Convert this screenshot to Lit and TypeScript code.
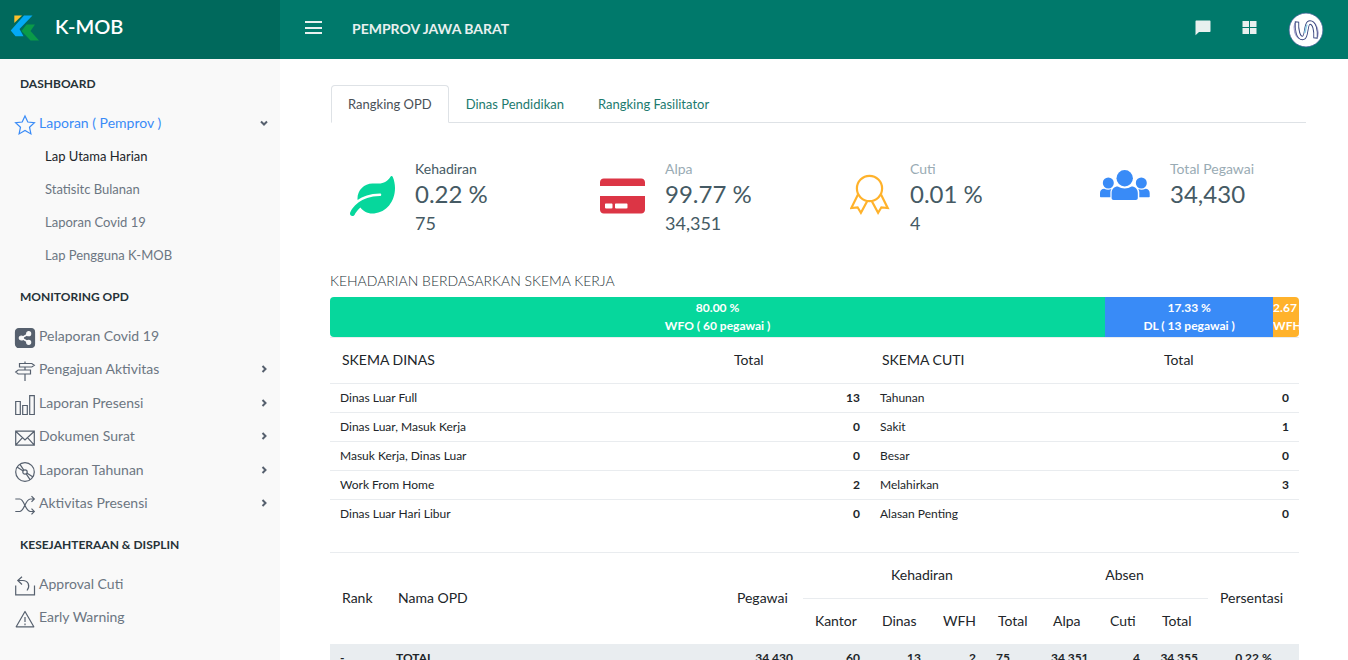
import { LitElement, html, svg, css, TemplateResult } from "lit";
import { customElement, property } from "lit/decorators.js";
import { classMap } from "lit/directives/class-map.js";

type Chevron = "right" | "down" | "";

const glyphs: Record<string, TemplateResult> = {
  star: svg`<path d="M10 .9l2.800 6.100 6.600.7-4.900 4.500 1.400 6.700L10 15.500l-5.900 3.400 1.400-6.700L.6 7.700l6.600-.7z"/>`,
  share: svg`<rect x=".5" y=".5" width="19" height="19" rx="3.500" fill="currentColor"/>
    <g stroke="#f9f9f9" fill="#f9f9f9"><path d="M13.700 5.700L6.300 10l7.400 4.300" fill="none" stroke-width="1.600"/><circle cx="13.700" cy="5.700" r="2"/><circle cx="6.300" cy="10" r="2"/><circle cx="13.700" cy="14.300" r="2"/></g>`,
  sign: svg`<path d="M10 .5v2M10 6v3M10 13v7M4.500 2.500h12.300l2.500 1.800L16.800 6H4.500zM15.500 9H3.200L.7 11l2.500 2h12.300z"/>`,
  bars: svg`<path d="M.7 6.500h4.600v13H.7zM7.700 10.500h4.600v9H7.700zM14.700.7h4.600v18.800h-4.600z"/>`,
  mail: svg`<path d="M.7 3.200h18.600v14H.7zM.7 3.200L10 12l9.300-8.800M.7 17.200l6.800-7.500M19.300 17.200l-6.800-7.500"/>`,
  disc: svg`<circle cx="10" cy="10" r="9.300"/><circle cx="10" cy="10" r="2.200"/><path d="M2 5l6.200 4M4.800 2.200l4 5.900M18 15l-6.200-4M15.200 17.800l-4-5.900"/>`,
  shuffle: svg`<path d="M.3 4h4.500c4.500 0 5.500 12.500 10.500 12.500h4M.3 16.500h4.500c4.500 0 5.500-12.500 10.500-12.500h4M16.500 1.200L19.300 4l-2.800 2.800M16.500 13.700l2.800 2.800-2.800 2.800"/>`,
  reply: svg`<path d="M.7 9.500v9.300h18.800V9.500M7 .8L2.800 4.500 7 8.500M2.800 4.500h5c5.500 0 7.700 5.500 4.200 10"/>`,
  warning: svg`<path d="M10 2.500L1.200 17.800h17.600zM10 8v5M10 14.500v1.700" stroke-linejoin="round"/>`,
};

const icons: Record<string, TemplateResult> = {
  leaf: html`<svg class="icon green" viewBox="0 0 576 512" width="45" height="40" aria-hidden="true"><path fill="currentColor" d="M546.200 9.700c-5.600-12.500-21.600-13-28.300-1.200C486.900 62.400 431.400 96 368 96h-80C182 96 96 182 96 288c0 7 .8 13.700 1.500 20.500C161.300 262.800 253.400 224 384 224c8.800 0 16 7.200 16 16s-7.200 16-16 16C132.600 256 26 410.100 2.400 468c-6.600 16.300 1.200 34.900 17.500 41.600 16.400 6.800 35-1.100 41.800-17.300 1.500-3.600 20.900-47.900 71.900-90.600 32.400 43.900 94 85.800 174.900 77.200C465.500 467.500 576 326.700 576 154.300c0-50.200-10.800-102.200-29.800-144.600z"/></svg>`,
  card: html`<svg class="icon red" viewBox="0 0 576 512" width="45" height="40" aria-hidden="true"><path fill="currentColor" d="M0 432c0 26.500 21.500 48 48 48h480c26.500 0 48-21.500 48-48V256H0v176zm192-68c0-6.600 5.400-12 12-12h136c6.600 0 12 5.400 12 12v40c0 6.600-5.400 12-12 12H204c-6.600 0-12-5.400-12-12v-40zm-128 0c0-6.600 5.400-12 12-12h72c6.600 0 12 5.400 12 12v40c0 6.600-5.400 12-12 12H76c-6.600 0-12-5.400-12-12v-40zM576 80v48H0V80c0-26.500 21.500-48 48-48h480c26.500 0 48 21.500 48 48z"/></svg>`,
  medal: html`<svg class="icon amber" viewBox="0 0 40 43" width="40" height="43" aria-hidden="true"><g fill="none" stroke="currentColor" stroke-width="2.200"><circle cx="19.500" cy="14.500" r="12.600"/><path d="M8 20.500L1.300 34l6.300-.7 3.300 5.400L17.300 27M31 20.500L37.700 34l-6.300-.7-3.300 5.400L21.700 27"/></g></svg>`,
  people: html`<svg class="icon blue" viewBox="0 -4 50 34" width="50" height="34" aria-hidden="true"><g fill="currentColor"><circle cx="8.300" cy="13" r="5.500"/><circle cx="41.300" cy="13" r="5.500"/><path d="M0 26.500v-3.500c0-2.500 1.700-4.200 4.200-4.200 2.500 1.300 5.200 1.200 7.300.2-.8 1-1.100 2.200-1.100 3.600v4.700H1c-.6 0-1-.2-1-.8zM49.700 26.500v-3.500c0-2.500-1.700-4.200-4.200-4.200-2.500 1.300-5.200 1.200-7.300.2.8 1 1.100 2.200 1.100 3.600v4.700h9.400c.6 0 1-.2 1-.8z"/><circle cx="24.700" cy="8.200" r="8.200"/><path d="M11.600 28v-5c0-4 2.700-6.500 6.200-6.500 4.200 2.500 9.600 2.500 13.800 0 3.500 0 6.200 2.500 6.200 6.500v5c0 1.300-.8 2-2 2H13.600c-1.200 0-2-.7-2-2z"/></g></svg>`,
};

@customElement("side-link")
class SideLink extends LitElement {
  @property() label = "";
  @property() icon = "";
  @property() chevron: Chevron = "";
  @property({ type: Boolean }) active = false;
  @property({ type: Boolean }) sub = false;

  static styles = css`
    :host { display: block; }
    .link {
      display: flex;
      align-items: center;
      gap: 4px;
      padding: 4px 12px 5px 15px;
      font-size: 14px;
      line-height: 1.75;
      color: #6c7682;
      text-decoration: none;
    }
    .sub { padding: 5px 45px 7px; font-size: 13px; line-height: 21px; }
    .active { color: #398bf7; }
    .sub.active { color: #212529; }
    .glyph {
      width: 20px;
      height: 20px;
      margin: 2px 0 -2px;
      flex: none;
      overflow: visible;
      fill: none;
      color: #56606e;
      stroke: currentColor;
      stroke-width: 1.2;
    }
    .active .glyph { color: #398bf7; }
    .text { flex: 1; white-space: nowrap; }
    .chevron { width: 8px; height: 8px; fill: none; stroke: #56606e; stroke-width: 2; }
    .down { transform: rotate(90deg); }
  `;

  render() {
    return html`<a href="#" class=${classMap({ link: true, sub: this.sub, active: this.active })}>
      ${this.icon ? html`<svg class="glyph" viewBox="0 0 20 20" aria-hidden="true">${glyphs[this.icon]}</svg>` : ""}
      <span class="text">${this.label}</span>
      ${this.chevron
        ? html`<svg class=${classMap({ chevron: true, down: this.chevron === "down" })} viewBox="0 0 8 8" aria-hidden="true"><path d="M2.500 1l3 3-3 3"/></svg>`
        : ""}
    </a>`;
  }
}

@customElement("app-root")
class AppRoot extends LitElement {
  static styles = css`
    :host {
      display: grid;
      grid-template: 59px 1fr / 280px 1fr;
      height: 100vh;
      overflow: hidden;
      background: #fff;
      color: #212529;
      font-family: Lato, "Open Sans", sans-serif;
    }
    button { padding: 0; border: 0; background: none; color: #e8f0ef; cursor: pointer; display: flex; }
    .brand { display: flex; align-items: center; gap: 16px; padding: 0 10px 3px; background: #00695c; color: #fff; font-size: 20px; font-weight: 600; }
    .name { padding-bottom: 5px; }
    .topbar { display: flex; align-items: center; padding: 0 24px; background: #00796b; color: #e8f0ef; }
    .menu { margin: 0 30px 4px 1px; }
    .org { flex: 1; margin: 0; padding-bottom: 2px; font-size: 14px; font-weight: 700; }
    .tools { display: flex; align-items: center; gap: 30px; }
    .tools .tool { margin-bottom: 4px; }
    .side { padding-top: 1px; background: #f9f9f9; overflow: hidden; }
    .heading { margin: 0; padding: 13px 20px 12px; font-size: 12px; line-height: 22px; font-weight: 700; color: #263238; }
    .main { overflow: auto; scrollbar-width: none; padding: 26px 0 40px; }
    .tabs { display: flex; margin: 0 42px 0 51px; border-bottom: 1px solid #dee2e6; }
    .tab { margin-bottom: -1px; padding: 8px 16px; border: 1px solid transparent; border-radius: 4px 4px 0 0; font-size: 13px; line-height: 20px; color: #1c7a6e; text-decoration: none; }
    .tab.current { border-color: #dee2e6 #dee2e6 #fff; color: #495057; background: #fff; }
    .stats { display: grid; grid-template-columns: repeat(4, 1fr); align-items: start; padding: 35px 18px 0 50px; }
    .stat { display: flex; align-items: center; gap: 20px; padding-left: 20px; color: #455a64; }
    .label { font-size: 14px; line-height: 22px; color: #99abb4; }
    .label.dark { color: #455a64; }
    .value { font-size: 24px; line-height: 28px; }
    .count { margin-top: 5px; font-size: 18px; line-height: 20px; }
    .icon { display: block; flex: none; }
    .green { color: #06d79c; }
    .red { color: #dc3545; }
    .amber { color: #ffb22b; }
    .blue { color: #398bf7; }
    .report { margin: 37px 49px 0 50px; }
    .title { margin: 0; font-size: 14px; line-height: 22px; font-weight: 300; color: #263238; }
    .bar { display: flex; margin-top: 5px; height: 40px; border-radius: 4px; overflow: hidden; }
    .part { overflow: hidden; padding: 2px 0; color: #fff; font-size: 12px; line-height: 18px; font-weight: 700; text-align: center; white-space: nowrap; display: flex; flex-direction: column; align-items: center; }
    .part.wfh { align-items: flex-start; }
    .wfo { background: #06d79c; }
    .dl { background: #398bf7; }
    .wfh { background: #ffb22b; }
    table { width: 100%; border-collapse: separate; border-spacing: 0; table-layout: fixed; }
    th { height: 43px; padding: 0 12px 2px; font-size: 14px; font-weight: 400; text-align: left; white-space: nowrap; }
    td { height: 26px; padding: 0 10px 2px; font-size: 12px; white-space: nowrap; }
    .schemes { margin-bottom: 24px; border-top: 1px solid #e9ecef; }
    .schemes th { border-bottom: 1px solid #e9ecef; }
    .schemes tbody tr:not(:first-child) td { border-top: 1px solid #e9ecef; }
    .num { text-align: right; font-weight: 700; }
    .ranking { border-top: 1px solid #e9ecef; }
    .ranking .group { text-align: center; border-bottom: 1px solid #e9ecef; }
    .ranking td { background: #e9edf0; font-weight: 700; }
    .ranking .mid { text-align: center; }
    .w52 { width: 52px; } .w55 { width: 55px; } .w56 { width: 56px; } .w57 { width: 57px; }
    .w58 { width: 58px; } .w61 { width: 61px; } .w67 { width: 67px; } .w78 { width: 78px; }
    .w91 { width: 91px; } .w147 { width: 147px; } .w148 { width: 148px; } .w282 { width: 282px; }
  `;

  private stats = [
    { icon: "leaf", label: "Kehadiran", value: "0.22 %", count: "75", dark: true },
    { icon: "card", label: "Alpa", value: "99.77 %", count: "34,351" },
    { icon: "medal", label: "Cuti", value: "0.01 %", count: "4" },
    { icon: "people", label: "Total Pegawai", value: "34,430" },
  ];

  private parts = [
    { kind: "wfo", share: 80, top: "80.00 %", text: "WFO ( 60 pegawai )" },
    { kind: "dl", share: 17.33, top: "17.33 %", text: "DL ( 13 pegawai )" },
    { kind: "wfh", share: 2.67, top: "2.67 %", text: "WFH ( 2 pegawai )" },
  ];

  private schemes = [
    ["Dinas Luar Full", 13, "Tahunan", 0],
    ["Dinas Luar, Masuk Kerja", 0, "Sakit", 1],
    ["Masuk Kerja, Dinas Luar", 0, "Besar", 0],
    ["Work From Home", 2, "Melahirkan", 3],
    ["Dinas Luar Hari Libur", 0, "Alasan Penting", 0],
  ];

  render() {
    return html`
      <div class="brand">
        <svg width="29" height="26" viewBox="0 0 29 26" aria-hidden="true">
          <path fill="#fbc02d" d="M4.300.5H12L4.300 8z"/>
          <path fill="#03a9f4" d="M14 .5h8.500L9.500 14l4 7.200H5.500L.7 15.500z"/>
          <path fill="#0a9a48" d="M16.500 9.500H25L20.500 16 29 25.500h-8.500L11.500 16z"/>
        </svg>
        <span class="name">K-MOB</span>
      </div>
      <header class="topbar">
        <button class="menu" aria-label="Menu"><svg width="17" height="14" aria-hidden="true"><path d="M0 1h17M0 7h17M0 12h17" stroke="currentColor" stroke-width="2"/></svg></button>
        <h1 class="org">PEMPROV JAWA BARAT</h1>
        <div class="tools">
          <button class="tool" aria-label="Pesan"><svg width="17" height="16" viewBox="0 0 17 16" aria-hidden="true"><path fill="currentColor" d="M1.500.5h13c.7 0 1 .3 1 1v9.500c0 .7-.3 1-1 1H4L.5 15.200V1.500c0-.7.3-1 1-1z"/></svg></button>
          <button class="tool" aria-label="Aplikasi"><svg width="16" height="14" viewBox="0 0 16 14" aria-hidden="true"><path fill="currentColor" d="M.5 0H7v6H.5zM8 0h6.500v6H8zM.5 7H7v6H.5zM8 7h6.500v6H8z"/></svg></button>
          <button aria-label="Profil"><svg width="36" height="36" viewBox="0 0 36 36" aria-hidden="true"><circle cx="18" cy="18" r="16.900" fill="#fff" stroke="#3f5f94" stroke-width=".8"/><g fill="none"><path d="M7 11c-2 6 0 13 4.500 15.500M29.500 25c1.500-6-.5-12.500-5-15.500" stroke="#a9a6cf" stroke-width="1.500"/><path d="M9 9.500c-.5 7 1 16.500 5.500 16.500 5 0 2.500-15.500 7.500-15.500 4.500 0 6 8.500 5.500 16" stroke="#35427c" stroke-width="4.400"/><path d="M9 10.500c-.5 7 1 15.500 5.500 15.500 5 0 2.500-15.500 7.500-15.500 4.500 0 6 8 5.500 15" stroke="#fff" stroke-width="2.600"/><path d="M16.800 21c.8-3 1.200-6 2.200-8.500" stroke="#8fd0e8" stroke-width="1.500"/></g></svg></button>
        </div>
      </header>
      <nav class="side">
        <h2 class="heading">DASHBOARD</h2>
        <side-link icon="star" label="Laporan ( Pemprov )" chevron="down" active></side-link>
        <side-link sub active label="Lap Utama Harian"></side-link>
        <side-link sub label="Statisitc Bulanan"></side-link>
        <side-link sub label="Laporan Covid 19"></side-link>
        <side-link sub label="Lap Pengguna K-MOB"></side-link>
        <h2 class="heading">MONITORING OPD</h2>
        <side-link icon="share" label="Pelaporan Covid 19"></side-link>
        <side-link icon="sign" label="Pengajuan Aktivitas" chevron="right"></side-link>
        <side-link icon="bars" label="Laporan Presensi" chevron="right"></side-link>
        <side-link icon="mail" label="Dokumen Surat" chevron="right"></side-link>
        <side-link icon="disc" label="Laporan Tahunan" chevron="right"></side-link>
        <side-link icon="shuffle" label="Aktivitas Presensi" chevron="right"></side-link>
        <h2 class="heading">KESEJAHTERAAN &amp; DISPLIN</h2>
        <side-link icon="reply" label="Approval Cuti"></side-link>
        <side-link icon="warning" label="Early Warning"></side-link>
      </nav>
      <main class="main">
        <nav class="tabs">
          <a class="tab current" href="#">Rangking OPD</a>
          <a class="tab" href="#">Dinas Pendidikan</a>
          <a class="tab" href="#">Rangking Fasilitator</a>
        </nav>
        <section class="stats">
          ${this.stats.map((s) => html`<div class="stat">${icons[s.icon]}
            <div>
              <div class=${classMap({ label: true, dark: !!s.dark })}>${s.label}</div>
              <div class="value">${s.value}</div>
              ${s.count ? html`<div class="count">${s.count}</div>` : ""}
            </div>
          </div>`)}
        </section>
        <section class="report">
          <h3 class="title">KEHADARIAN BERDASARKAN SKEMA KERJA</h3>
          <div class="bar">
            ${this.parts.map((p) => html`<div class="part ${p.kind}" style="width:${p.share}%"><span>${p.top}</span><span>${p.text}</span></div>`)}
          </div>
          <table class="schemes">
            <colgroup><col><col class="w148"><col class="w282"><col class="w147"></colgroup>
            <thead><tr><th>SKEMA DINAS</th><th>Total</th><th>SKEMA CUTI</th><th>Total</th></tr></thead>
            <tbody>${this.schemes.map((r) => html`<tr><td>${r[0]}</td><td class="num">${r[1]}</td><td>${r[2]}</td><td class="num">${r[3]}</td></tr>`)}</tbody>
          </table>
          <table class="ranking">
            <colgroup><col class="w56"><col><col class="w78"><col class="w67"><col class="w61"><col class="w55"><col class="w55"><col class="w57"><col class="w52"><col class="w58"><col class="w91"></colgroup>
            <thead>
              <tr><th rowspan="2">Rank</th><th rowspan="2">Nama OPD</th><th rowspan="2">Pegawai</th><th class="group" colspan="4">Kehadiran</th><th class="group" colspan="3">Absen</th><th rowspan="2">Persentasi</th></tr>
              <tr><th>Kantor</th><th>Dinas</th><th>WFH</th><th>Total</th><th>Alpa</th><th>Cuti</th><th>Total</th></tr>
            </thead>
            <tbody>
              <tr><td>-</td><td>TOTAL</td><td class="num">34,430</td><td class="num">60</td><td class="num">13</td><td class="num">2</td><td>75</td><td class="num">34,351</td><td class="num">4</td><td class="num">34,355</td><td class="mid">0.22 %</td></tr>
            </tbody>
          </table>
        </section>
      </main>
    `;
  }
}
